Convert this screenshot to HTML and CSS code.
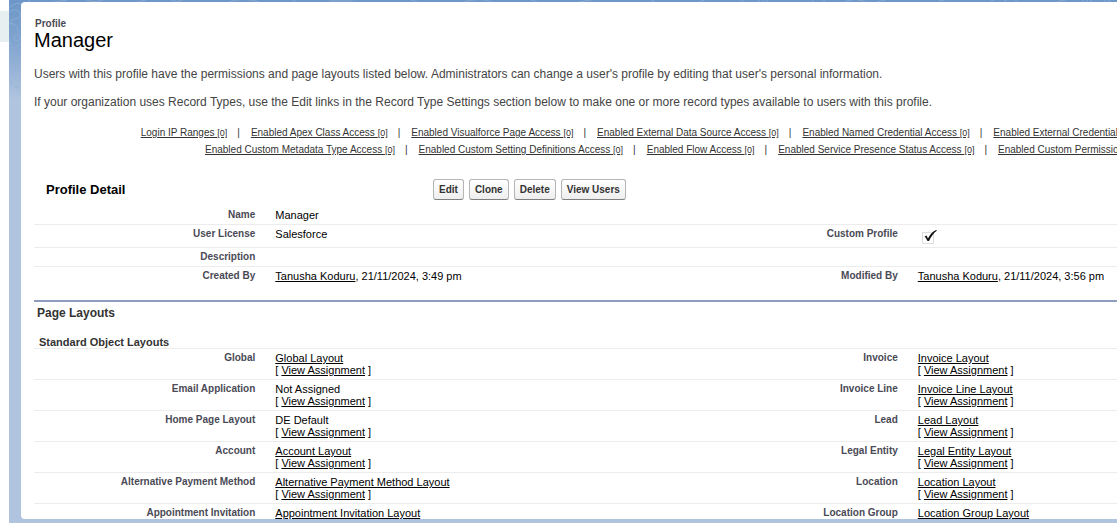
FILE: index.html
```html
<!DOCTYPE html>
<html lang="en">
<head>
<meta charset="utf-8">
<title>Profile: Manager</title>
<link rel="stylesheet" href="styles.css">
</head>
<body>
<div class="app">
<div class="rail"><div class="rail-item"></div></div>
<div class="frame">
<svg class="doodles" width="1108" height="110" fill="none" stroke="#93b3d7" aria-hidden="true">
<path d="M0 13c4-5 9-4 11 1s-5 4-8 6-1 5 2 6M0 8c5-5 10-6 14-3M-1 46c5 4 9 1 11-2s4-2 6-1M0 24c5-2 10 3 9 10M2 45l-3-8"/><circle cx="8" cy="38" r="3"/><circle cx="11" cy="78" r="10" stroke-dasharray="5 3"/>
<path d="M18-2l5 6M40 3l18-3M75-1q14 6 22-1M125 3l12-3M160-1l8 3 8-3M220 2q14-5 30 0M282-1l5 3M320 1h22l5-3M400-1l8 3M455 2q16-5 28 0M520-1l8 3M570 2l18-3M640-1l6 3M690 2l8-3M730-1l5 3M748-1l4 4 4-4 4 4M802-1l3 4M815-1v4M836 2q10-5 20 0M868 2l12-3M930 1l14-3M982 1q8-4 16 0M1005-1l5 4M1048 2l12-3M1072-1l4 4 4-4 4 4M1094 3l4-4 5 4"/>
</svg>
<main class="panel">
<div class="content">
<header>
<p class="kind">Profile</p>
<h1>Manager</h1>
<p class="intro">Users with this profile have the permissions and page layouts listed below. Administrators can change a user's profile by editing that user's personal information.</p>
<p class="intro">If your organization uses Record Types, use the Edit links in the Record Type Settings section below to make one or more record types available to users with this profile.</p>
</header>
<nav class="related">
<ul>
<li><a href="#">Login IP Ranges <small>[0]</small></a></li>
<li><a href="#">Enabled Apex Class Access <small>[0]</small></a></li>
<li><a href="#">Enabled Visualforce Page Access <small>[0]</small></a></li>
<li><a href="#">Enabled External Data Source Access <small>[0]</small></a></li>
<li><a href="#">Enabled Named Credential Access <small>[0]</small></a></li>
<li><a href="#">Enabled External Credential Principal Access <small>[0]</small></a></li>
</ul>
<ul>
<li><a href="#">Enabled Custom Metadata Type Access <small>[0]</small></a></li>
<li><a href="#">Enabled Custom Setting Definitions Access <small>[0]</small></a></li>
<li><a href="#">Enabled Flow Access <small>[0]</small></a></li>
<li><a href="#">Enabled Service Presence Status Access <small>[0]</small></a></li>
<li><a href="#">Enabled Custom Permissions <small>[0]</small></a></li>
</ul>
</nav>
<section>
<div class="toolbar">
<h2>Profile Detail</h2>
<div class="actions"><button type="button">Edit</button><button type="button">Clone</button><button type="button">Delete</button><button type="button">View Users</button></div>
</div>
<table class="fields">
<colgroup><col class="label"><col class="value"><col class="label"><col class="value"></colgroup>
<tr><th>Name</th><td colspan="3">Manager</td></tr>
<tr><th>User License</th><td>Salesforce</td><th>Custom Profile</th><td><svg class="check" width="21" height="16" viewBox="0 0 21 16" role="img" aria-label="Checked"><path d="M4.500 4.500h11v11h-11z" fill="none" stroke="#bbb" stroke-dasharray="1 1"/><path d="M6.500 8.500l2-1 1.500 3c2-4 4.500-7 8-8.500l1 .5c-4 3-6 6.500-8 10.500H9.500c-1-2-1.500-3-3-4.500z" fill="#111"/></svg></td></tr>
<tr><th>Description</th><td colspan="3">&nbsp;</td></tr>
<tr><th>Created By</th><td><a href="#">Tanusha Koduru</a>, 21/11/2024, 3:49 pm</td><th>Modified By</th><td><a href="#">Tanusha Koduru</a>, 21/11/2024, 3:56 pm</td></tr>
</table>
</section>
<section class="layouts">
<h3>Page Layouts</h3>
<h4>Standard Object Layouts</h4>
<table class="fields">
<colgroup><col class="label"><col class="value"><col class="label"><col class="value"></colgroup>
<tr><th>Global</th><td><a href="#">Global Layout</a><br>[ <a href="#">View Assignment</a> ]</td><th>Invoice</th><td><a href="#">Invoice Layout</a><br>[ <a href="#">View Assignment</a> ]</td></tr>
<tr><th>Email Application</th><td>Not Assigned<br>[ <a href="#">View Assignment</a> ]</td><th>Invoice Line</th><td><a href="#">Invoice Line Layout</a><br>[ <a href="#">View Assignment</a> ]</td></tr>
<tr><th>Home Page Layout</th><td>DE Default<br>[ <a href="#">View Assignment</a> ]</td><th>Lead</th><td><a href="#">Lead Layout</a><br>[ <a href="#">View Assignment</a> ]</td></tr>
<tr><th>Account</th><td><a href="#">Account Layout</a><br>[ <a href="#">View Assignment</a> ]</td><th>Legal Entity</th><td><a href="#">Legal Entity Layout</a><br>[ <a href="#">View Assignment</a> ]</td></tr>
<tr><th>Alternative Payment Method</th><td><a href="#">Alternative Payment Method Layout</a><br>[ <a href="#">View Assignment</a> ]</td><th>Location</th><td><a href="#">Location Layout</a><br>[ <a href="#">View Assignment</a> ]</td></tr>
<tr><th>Appointment Invitation</th><td><a href="#">Appointment Invitation Layout</a></td><th>Location Group</th><td><a href="#">Location Group Layout</a></td></tr>
</table>
</section>
</div>
</main>
</div>
</div>
</body>
</html>
```
FILE: styles.css
```css
* { box-sizing: border-box; }
body {
  margin: 0;
  overflow: hidden;
  font-family: "Liberation Sans", Arial, sans-serif;
  font-size: 11px;
  line-height: 12px;
  color: #000;
}
h1, h2, h3, h4, p, ul { margin: 0; padding: 0; }
a { color: inherit; text-decoration: underline; }

.app { display: flex; height: 100vh; }
.rail { flex: 0 0 9px; padding-top: 11px; }
.rail-item { height: 31px; background: #e8eff1; }
.frame {
  position: relative;
  flex: 1;
  min-width: 0;
  padding: 2px 0 4px 12px;
  background: #b0c4df linear-gradient(#6d97c8, #7fa3cf 40px, #b0c4df 100px) no-repeat;
}
.doodles {
  position: absolute;
  top: 0;
  left: 0;
  opacity: 0.7;
}
.panel {
  position: relative;
  height: 100%;
  overflow: hidden;
  border-radius: 4px 0 0 4px;
  background: #fff;
}
.content {
  min-width: 1311px;
  padding: 16px 13px 0;
}

.kind { font-size: 10px; font-weight: bold; color: #4a4a56; padding-left: 1px; }
h1 { font-size: 20px; line-height: 20px; font-weight: normal; }
.intro { font-size: 12px; line-height: 16px; color: #444; }
h1 + .intro { margin-top: 16px; }
.intro + .intro { margin-top: 12px; }

.related { padding: 14px 6px 0 0; font-size: 10px; line-height: 17px; color: #333; }
.related ul { display: flex; justify-content: center; list-style: none; white-space: nowrap; }
.related li + li::before { content: "|"; padding: 0 11px 0 10px; }
.related small { font-size: 9px; line-height: 1; }

.toolbar { display: flex; align-items: center; margin-top: 21px; padding-left: 12px; height: 21px; }
h2 { width: 387px; font-size: 13px; line-height: 16px; }
.actions { display: flex; gap: 5px; }
.actions button {
  height: 21px;
  padding: 0 5px;
  border: 1px solid #b5b5b5;
  border-bottom-color: #7f7f7f;
  border-radius: 3px;
  background: linear-gradient(#fff, #eee);
  font: bold 10px "Liberation Sans", Arial, sans-serif;
  color: #333;
}

.fields { width: 100%; table-layout: fixed; border-collapse: separate; border-spacing: 0; }
.label { width: 18%; }
.value { width: 32%; }
.toolbar + .fields { margin-top: 6px; }
.fields th, .fields td { padding: 3px 10px; vertical-align: top; border-bottom: 1px solid #ececec; }
.fields th { text-align: right; font-size: 10px; color: #4a4a56; }
.toolbar + .fields tr:last-child > * { border-bottom: 0; }
.check { display: block; }

.layouts { margin-top: 15px; border-top: 2px solid #8e9dbe; }
h3 { padding: 3px 3px 0; font-size: 12px; line-height: 16px; color: #333; }
h4 { padding: 15px 5px 0; font-size: 11px; color: #333; border-bottom: 1px solid #ececec; }
```
